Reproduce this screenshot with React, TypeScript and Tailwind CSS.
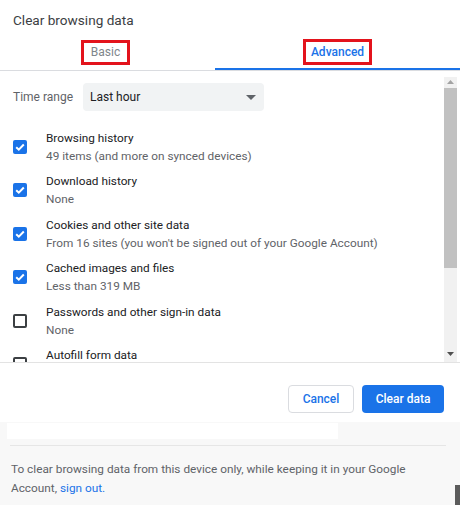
const items = [
  { label: 'Browsing history', sub: '49 items (and more on synced devices)', checked: true },
  { label: 'Download history', sub: 'None', checked: true },
  { label: 'Cookies and other site data', sub: "From 16 sites (you won't be signed out of your Google Account)", checked: true },
  { label: 'Cached images and files', sub: 'Less than 319 MB', checked: true },
  { label: 'Passwords and other sign-in data', sub: 'None', checked: false },
  { label: 'Autofill form data', sub: 'None', checked: false },
];

function Checkbox({ checked }: { checked: boolean }) {
  if (checked) {
    return (
      <span className="flex h-[14px] w-[14px] shrink-0 items-center justify-center rounded-[2px] bg-[#1a73e8]">
        <svg viewBox="0 0 14 14" className="h-[14px] w-[14px]">
          <path d="M3.2 7.2 L5.8 9.7 L10.8 4.5" fill="none" stroke="white" strokeWidth="2" />
        </svg>
      </span>
    );
  }
  return <span className="h-[14px] w-[14px] shrink-0 rounded-[2px] border-2 border-[#3c4043]" />;
}

export default function App() {
  return (
    <div className="relative flex h-[505px] w-[460px] flex-col overflow-hidden bg-white font-['Roboto',sans-serif] text-[#202124]">
      <h1 className="px-[13px] pt-[11px] text-[13.6px] leading-[18px] text-[#3c4043]">Clear browsing data</h1>

      <div className="mt-[4px] flex h-[38px] border-b border-[#dadce0]">
        <div className="flex w-[215px] items-center justify-center pr-[4px] pt-[2px]">
          <span className="border-[3px] border-[#e3131c] px-[7px] text-[12px] leading-[19px] text-[#80868b]">Basic</span>
        </div>
        <div className="flex flex-1 items-center justify-center border-b-2 border-[#1a73e8] pt-[3px]">
          <span className="border-[3px] border-[#e3131c] px-[5px] text-[12px] font-medium leading-[20px] text-[#1a73e8]">Advanced</span>
        </div>
      </div>

      <div className="flex h-[292px] border-b border-[#e3e3e3]">
        <div className="flex-1 overflow-hidden px-[13px] pt-[12px]">
          <div className="flex items-center gap-[7px]">
            <span className="w-[63px] text-[12px] text-[#5f6368]">Time range</span>
            <div className="flex h-[28px] w-[181px] items-center justify-between rounded-[4px] bg-[#f1f3f4] pl-[7px] pr-[8px] text-[12px]">
              <span>Last hour</span>
              <svg viewBox="0 0 10 5" className="h-[5px] w-[10px]">
                <path d="M0 0 L10 0 L5 5 Z" fill="#5f6368" />
              </svg>
            </div>
          </div>
          <div className="mt-[14px] flex flex-col">
            {items.map((it) => (
              <div key={it.label} className="flex h-[43.5px] shrink-0 items-center gap-[19px]">
                <Checkbox checked={it.checked} />
                <div className="flex flex-col text-[11.8px] leading-[18px]">
                  <span>{it.label}</span>
                  <span className="text-[#5f6368]">{it.sub}</span>
                </div>
              </div>
            ))}
          </div>
        </div>
        <div className="mr-[3px] mt-[6px] flex w-[13px] flex-col items-center bg-[#f1f1f1]">
          <svg viewBox="0 0 7 4" className="mt-[3px] h-[4px] w-[7px]">
            <path d="M0 4 L3.5 0 L7 4 Z" fill="#a3a3a3" />
          </svg>
          <div className="mt-[4px] h-[180px] w-full bg-[#c1c1c1]" />
          <div className="flex-1" />
          <svg viewBox="0 0 7 4" className="mb-[6px] h-[4px] w-[7px]">
            <path d="M0 0 L7 0 L3.5 4 Z" fill="#505050" />
          </svg>
        </div>
      </div>

      <div className="flex h-[59px] items-start justify-end gap-[8px] pr-[16px] pt-[22px]">
        <button className="h-[28px] w-[66px] rounded-[4px] border border-[#dadce0] bg-white text-[12px] font-medium text-[#1a73e8]">
          Cancel
        </button>
        <button className="h-[28px] w-[82px] rounded-[4px] bg-[#1a73e8] text-[12px] font-medium text-white">
          Clear data
        </button>
      </div>

      <div className="flex flex-1 flex-col bg-[#f8f8f8]">
        <div className="ml-[7px] mt-[1px] h-[16px] w-[331px] bg-white" />
        <div className="mx-[10px] mt-[6px] h-px w-[436px] bg-[#e6e6e6]" />
        <p className="pl-[11px] pr-[40px] pt-[14px] text-[11.8px] leading-[19px] text-[#5f6368]">
          To clear browsing data from this device only, while keeping it in your Google Account,{' '}
          <span className="text-[#1a73e8]">sign out.</span>
        </p>
      </div>

      <div className="absolute bottom-0 right-0 h-[20px] w-[5px] bg-[#5c5c5c]" />
    </div>
  );
}
